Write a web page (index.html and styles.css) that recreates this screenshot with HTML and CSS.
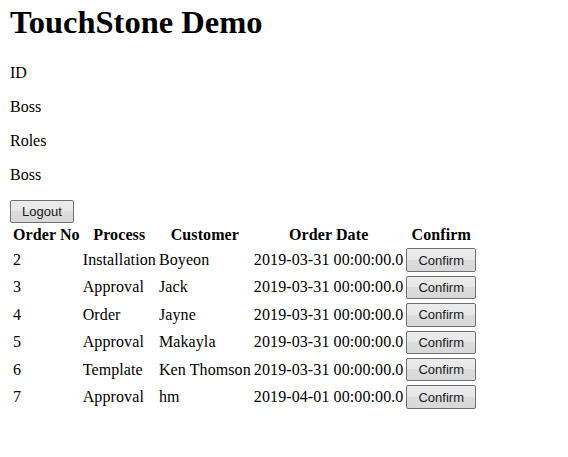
FILE: index.html
```html
<!DOCTYPE html>
<html>
<head>
<meta charset="utf-8">
<link rel="stylesheet" href="styles.css">
</head>
<body>
<h1 class="title">TouchStone Demo</h1>
<p class="info">ID</p>
<p class="info">Boss</p>
<p class="info">Roles</p>
<p class="info">Boss</p>
<div class="actions"><button class="btn">Logout</button></div>
<table class="orders">
<thead>
<tr><th>Order No</th><th>Process</th><th>Customer</th><th>Order Date</th><th>Confirm</th></tr>
</thead>
<tbody>
<tr><td>2</td><td>Installation</td><td>Boyeon</td><td>2019-03-31 00:00:00.0</td><td><button class="btn">Confirm</button></td></tr>
<tr><td>3</td><td>Approval</td><td>Jack</td><td>2019-03-31 00:00:00.0</td><td><button class="btn">Confirm</button></td></tr>
<tr><td>4</td><td>Order</td><td>Jayne</td><td>2019-03-31 00:00:00.0</td><td><button class="btn">Confirm</button></td></tr>
<tr><td>5</td><td>Approval</td><td>Makayla</td><td>2019-03-31 00:00:00.0</td><td><button class="btn">Confirm</button></td></tr>
<tr><td>6</td><td>Template</td><td>Ken Thomson</td><td>2019-03-31 00:00:00.0</td><td><button class="btn">Confirm</button></td></tr>
<tr><td>7</td><td>Approval</td><td>hm</td><td>2019-04-01 00:00:00.0</td><td><button class="btn">Confirm</button></td></tr>
</tbody>
</table>
</body>
</html>
```
FILE: styles.css
```css
body {
  margin: 0 10px;
  font-family: "Liberation Serif", serif;
  font-size: 16px;
  color: #000;
  background: #fff;
}
.title {
  font-size: 32.5px;
  font-weight: bold;
  margin: 4px 0 23px;
  line-height: 37px;
}
.info {
  margin: 16px 0;
  line-height: 18px;
}
.actions {
  margin-top: 15px;
}
.btn {
  font-family: "Liberation Sans", Arial, sans-serif;
  font-size: 13px;
  letter-spacing: 0;
  height: 23.4px;
  padding: 0 11px;
  border: 1px solid #707070;
  border-radius: 2px;
  background: linear-gradient(#ececec, #e6e6e6 50%, #dcdcdc 50%, #d8d8d8);
  color: #1a1a1a;
  vertical-align: middle;
}
.orders {
  border-collapse: separate;
  border-spacing: 2px;
  margin-top: 0;
}
.orders th, .orders td {
  padding: 1px 0 1px 1px;
  text-align: left;
  line-height: 18px;
  letter-spacing: 0.1px;
}
.orders th {
  text-align: center;
  font-weight: bold;
}
```
